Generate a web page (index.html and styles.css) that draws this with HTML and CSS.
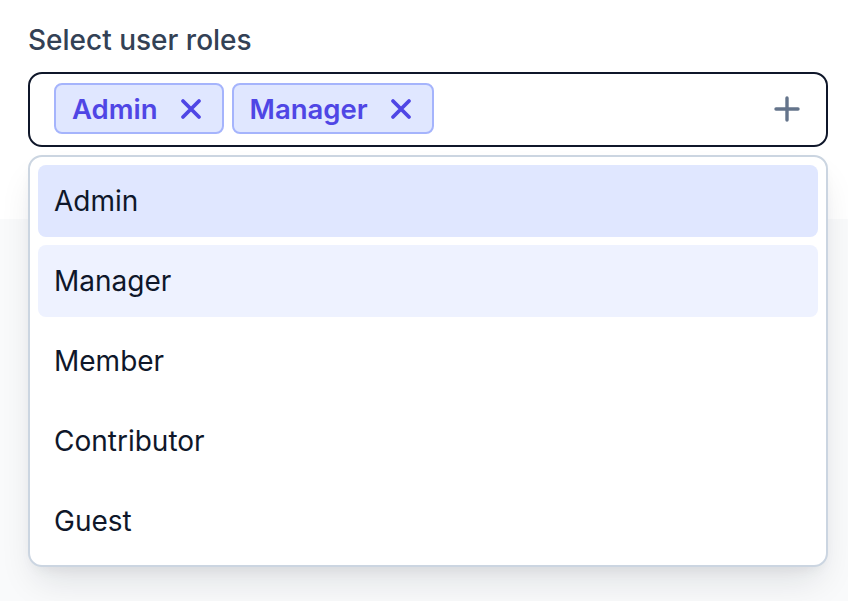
FILE: index.html
```html
<!DOCTYPE html>
<html lang="en">
<head>
<meta charset="utf-8">
<title>Select user roles</title>
<link rel="stylesheet" href="styles.css">
</head>
<body>
<section class="panel">
  <div class="field">
    <label class="label">Select user roles</label>
    <div class="control">
      <div class="chips">
        <span class="chip">Admin
          <svg class="chip-x" viewBox="0 0 22 22" aria-hidden="true"><path d="M3 3L19 19M19 3L3 19"/></svg>
        </span>
        <span class="chip">Manager
          <svg class="chip-x" viewBox="0 0 22 22" aria-hidden="true"><path d="M3 3L19 19M19 3L3 19"/></svg>
        </span>
      </div>
      <svg class="plus" viewBox="0 0 26 26" aria-hidden="true"><path d="M13 2V24M2 13H24"/></svg>
    </div>
    <ul class="menu">
      <li class="option active">Admin</li>
      <li class="option selected">Manager</li>
      <li class="option">Member</li>
      <li class="option">Contributor</li>
      <li class="option">Guest</li>
    </ul>
  </div>
</section>
</body>
</html>
```

FILE: styles.css
```css
* { box-sizing: border-box; }

html, body {
  margin: 0;
  padding: 0;
}

body {
  background: #f9fafb;
  font-family: Inter, "Noto Sans", sans-serif;
  width: 848px;
  height: 601px;
  overflow: hidden;
}

.panel {
  background: #ffffff;
  height: 219px;
  padding: 20px 20px 0 28px;
}

.field {
  position: relative;
  width: 800px;
}

.label {
  display: block;
  font-size: 28px;
  font-weight: 500;
  line-height: 40px;
  color: #334155;
  margin-bottom: 12px;
}

.control {
  display: flex;
  align-items: center;
  justify-content: space-between;
  height: 75px;
  border: 2px solid #0f172a;
  border-radius: 14px;
  padding: 0 26px 2px 24px;
  background: #ffffff;
}

.chips {
  display: flex;
  gap: 8px;
}

.chip {
  display: inline-flex;
  align-items: center;
  gap: 22px;
  height: 51px;
  padding: 0 20px 0 16px;
  border: 2px solid #a5b4fc;
  border-radius: 8px;
  background: #e0e7ff;
  color: #4f46e5;
  font-size: 27.5px;
  font-weight: 600;
}

.chip-x {
  width: 22px;
  height: 22px;
  fill: none;
  stroke: #4f46e5;
  stroke-width: 3.8;
  stroke-linecap: round;
}

.plus {
  width: 26px;
  height: 26px;
  fill: none;
  stroke: #64748b;
  stroke-width: 3.4;
  stroke-linecap: round;
}

.menu {
  position: absolute;
  left: 0;
  top: 135px;
  width: 800px;
  margin: 0;
  padding: 8px;
  list-style: none;
  background: #ffffff;
  border: 2px solid #cbd5e1;
  border-radius: 14px;
  box-shadow: 0 20px 36px -8px rgba(15, 23, 42, 0.12), 0 6px 14px -6px rgba(15, 23, 42, 0.08);
  display: flex;
  flex-direction: column;
  gap: 8px;
}

.option {
  height: 72px;
  display: flex;
  align-items: center;
  padding: 0 16px;
  border-radius: 8px;
  font-size: 28px;
  color: #0f172a;
}

.option.active { background: #e0e7ff; }
.option.selected { background: #eef2ff; }
```
